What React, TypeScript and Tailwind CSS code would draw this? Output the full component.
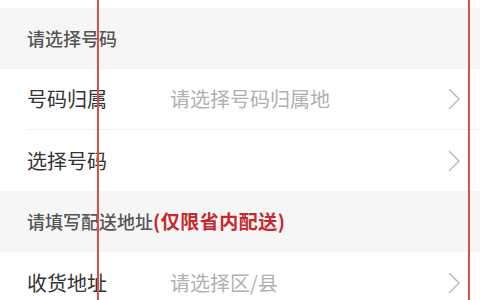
import React from "react";

const font = { fontFamily: '"Noto Sans CJK SC", "Noto Sans", sans-serif' };

function Chevron() {
  return (
    <svg width="16" height="24" viewBox="0 0 16 24" className="shrink-0">
      <polyline points="3,2 13,12 3,22" fill="none" stroke="#bdbdbd" strokeWidth="1.5" />
    </svg>
  );
}

function SectionHeader({ children }: { children: React.ReactNode }) {
  return (
    <div className="h-[61px] bg-[#f6f6f6] flex items-center pl-[27px] text-[18px] font-medium text-[#555]">
      {children}
    </div>
  );
}

function Row({ label, placeholder, divider }: { label: string; placeholder?: string; divider?: boolean }) {
  return (
    <div className="pl-[27px] bg-white">
      <div className={`h-[61px] flex items-center pr-[18px] ${divider ? "border-b border-[#eeeeee]" : ""}`}>
        <span className="w-[143px] text-[20px] text-[#333]">{label}</span>
        <span className="flex-1 text-[20px] text-[#b0b0b0]">{placeholder}</span>
        <Chevron />
      </div>
    </div>
  );
}

export default function App() {
  return (
    <div className="relative w-[480px] h-[300px] overflow-hidden bg-white" style={font}>
      <div className="h-[8px] bg-white" />
      <SectionHeader>请选择号码</SectionHeader>
      <Row label="号码归属" placeholder="请选择号码归属地" divider />
      <Row label="选择号码" />
      <SectionHeader>
        请填写配送地址<span className="text-[#c9272b] font-bold text-[19px] tracking-[0.5px]">(仅限省内配送)</span>
      </SectionHeader>
      <Row label="收货地址" placeholder="请选择区/县" />

      {/* red guide lines over the page */}
      <div className="absolute top-0 bottom-0 left-[97px] w-[2px] bg-[#da4f4a]" />
      <div className="absolute top-0 bottom-0 left-[468px] w-[2px] bg-[#da4f4a]" />
    </div>
  );
}
